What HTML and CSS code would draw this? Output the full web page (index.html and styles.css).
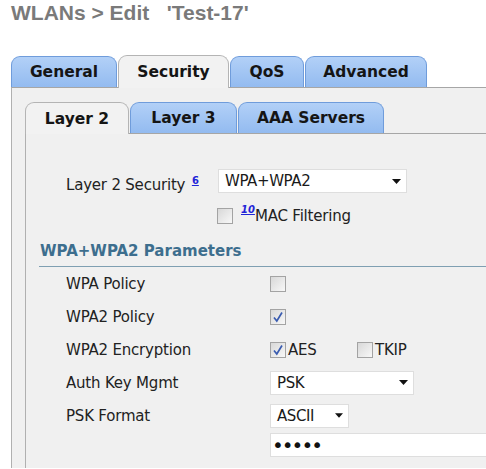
FILE: index.html
```html
<!DOCTYPE html>
<html>
<head>
<meta charset="utf-8">
<link rel="stylesheet" href="styles.css">
</head>
<body>
<div class="title">WLANs &gt; Edit   'Test-17'</div>
<div class="tabs">
  <div class="tab w-general">General</div>
  <div class="tab active w-security">Security</div>
  <div class="tab w-qos">QoS</div>
  <div class="tab w-advanced">Advanced</div>
</div>
<div class="panel">
  <div class="tabs sub">
    <div class="tab active w-l2">Layer 2</div>
    <div class="tab w-l3">Layer 3</div>
    <div class="tab w-aaa">AAA Servers</div>
  </div>
  <div class="subpanel">
    <div class="l2row">
      <div class="l2label">Layer 2 Security <a class="ref">6</a></div>
      <div class="select w-sec"><span>WPA+WPA2</span><svg class="arrow" width="9" height="5" viewBox="0 0 9 5"><polygon points="0,0 9,0 4.5,5" fill="#111"/></svg></div>
    </div>
    <div class="macrow">
      <span class="cb"></span>
      <a class="ref ital">10</a><span class="txt">MAC Filtering</span>
    </div>
    <div class="heading">WPA+WPA2 Parameters</div>
    <div class="row">
      <div class="lbl">WPA Policy</div>
      <span class="cb"></span>
    </div>
    <div class="row">
      <div class="lbl">WPA2 Policy</div>
      <span class="cb"><svg width="14" height="14" viewBox="0 0 14 14"><path d="M3 7.5 L5.8 11 L11 2.5" fill="none" stroke="#3a5cb0" stroke-width="1.7"/></svg></span>
    </div>
    <div class="row">
      <div class="lbl">WPA2 Encryption</div>
      <div class="opt"><span class="cb"><svg width="14" height="14" viewBox="0 0 14 14"><path d="M3 7.5 L5.8 11 L11 2.5" fill="none" stroke="#3a5cb0" stroke-width="1.7"/></svg></span><span class="txt tight">AES</span></div>
      <div class="opt2"><span class="cb"></span><span class="txt tight">TKIP</span></div>
    </div>
    <div class="row">
      <div class="lbl">Auth Key Mgmt</div>
      <div class="select w-auth"><span>PSK</span><svg class="arrow" width="9" height="5" viewBox="0 0 9 5"><polygon points="0,0 9,0 4.5,5" fill="#111"/></svg></div>
    </div>
    <div class="row">
      <div class="lbl">PSK Format</div>
      <div class="select w-psk"><span>ASCII</span><svg class="arrow" width="8" height="5" viewBox="0 0 9 5"><polygon points="0,0 9,0 4.5,5" fill="#111"/></svg></div>
    </div>
    <div class="pwdrow">
      <div class="pwd"><span class="dots">•••••</span></div>
    </div>
  </div>
</div>
</body>
</html>
```

FILE: styles.css
```css
html, body {
  margin: 0;
  overflow: hidden;
  background: #ffffff;
}
body {
  font-family: "DejaVu Sans", Verdana, sans-serif;
  color: #222222;
}
.title {
  font: bold 21px/26px "Liberation Sans", Arial, sans-serif;
  color: #7a7a7a;
  padding-left: 11px;
  white-space: pre;
}
.tabs {
  display: flex;
  align-items: flex-end;
  gap: 1px;
  height: 32px;
  margin: 29px 0 0 11px;
}
.tabs.sub {
  height: 31px;
  margin: 0;
}
.tab {
  box-sizing: border-box;
  height: 31px;
  border: 1px solid #6f9cdb;
  border-bottom: 0;
  border-radius: 9px 9px 0 0;
  background: linear-gradient(#b2d0f7, #93bbf0);
  font-weight: bold;
  font-size: 15.5px;
  color: #151515;
  display: flex;
  align-items: center;
  justify-content: center;
}
.tab.active {
  height: 33px;
  margin-bottom: -1px;
  background: #f2f2f2;
  border-color: #b4b4b4;
  position: relative;
  z-index: 1;
}
.sub .tab.active {
  height: 32px;
}
.w-general { width: 106px; }
.w-security { width: 111px; }
.w-qos { width: 74px; }
.w-advanced { width: 122px; }
.w-l2 { width: 104px; }
.w-l3 { width: 107px; }
.w-aaa { width: 146px; }

.panel {
  margin-left: 11px;
  border-left: 1px solid #b0b0b0;
  border-top: 1px solid #a6a6a6;
  background: #f0f0f0;
  padding: 14px 0 0 13px;
}
.subpanel {
  border-left: 1px solid #b0b0b0;
  border-top: 1px solid #a6a6a6;
  background: #f0f0f0;
  padding-top: 34px;
  min-height: 300px;
}
.l2row {
  display: grid;
  grid-template-columns: 152px auto;
  align-items: center;
  padding-left: 40px;
  height: 24px;
}
.l2label {
  font-size: 15px;
  letter-spacing: -0.2px;
  padding-top: 7px;
  white-space: nowrap;
}
.ref {
  font-size: 10px;
  font-weight: bold;
  color: #1f24d8;
  text-decoration: underline;
  letter-spacing: 0;
  vertical-align: 6px;
  margin-left: 2px;
}
.ital {
  font-style: italic;
  vertical-align: 0;
  align-self: flex-start;
  margin: -4px 0 0 8px;
}
.select {
  box-sizing: border-box;
  height: 24px;
  background: #ffffff;
  border: 1px solid #dedede;
  display: flex;
  align-items: center;
  justify-content: space-between;
  padding: 0 5px 0 6px;
  font-size: 15px;
  letter-spacing: -0.4px;
  color: #1a1a1a;
}
.w-sec { width: 189px; }
.w-auth { width: 144px; }
.w-psk { width: 79px; }
.macrow {
  display: flex;
  align-items: center;
  margin-top: 16px;
  padding-left: 191px;
  height: 16px;
}
.cb {
  box-sizing: border-box;
  width: 16px;
  height: 16px;
  flex: none;
  border: 1px solid #a3a3a3;
  background: linear-gradient(135deg, #d8d8d8, #f8f8f8);
  display: inline-flex;
  align-items: center;
  justify-content: center;
}
.txt {
  font-size: 15px;
  letter-spacing: -0.2px;
  color: #222222;
}
.tight {
  margin-left: 2px;
}
.heading {
  margin: 18px 0 0 13px;
  padding: 0 0 6px 1px;
  border-bottom: 1px solid #7f9fb2;
  font-weight: bold;
  font-size: 15px;
  line-height: 18px;
  color: #3d6e8e;
}
.row {
  display: flex;
  align-items: center;
  height: 33px;
  padding-left: 40px;
}
.lbl {
  width: 204px;
  flex: none;
  font-size: 15px;
  letter-spacing: -0.2px;
}
.opt {
  display: flex;
  align-items: center;
  width: 87px;
}
.opt2 {
  display: flex;
  align-items: center;
}
.pwdrow {
  padding: 1px 0 0 244px;
}
.pwd {
  box-sizing: border-box;
  height: 24px;
  background: #ffffff;
  border: 1px solid #dedede;
  border-right: 0;
  display: flex;
  align-items: center;
  padding-left: 1px;
}
.dots {
  font-size: 20px;
  letter-spacing: -2px;
  color: #111111;
  line-height: 1;
}
```
